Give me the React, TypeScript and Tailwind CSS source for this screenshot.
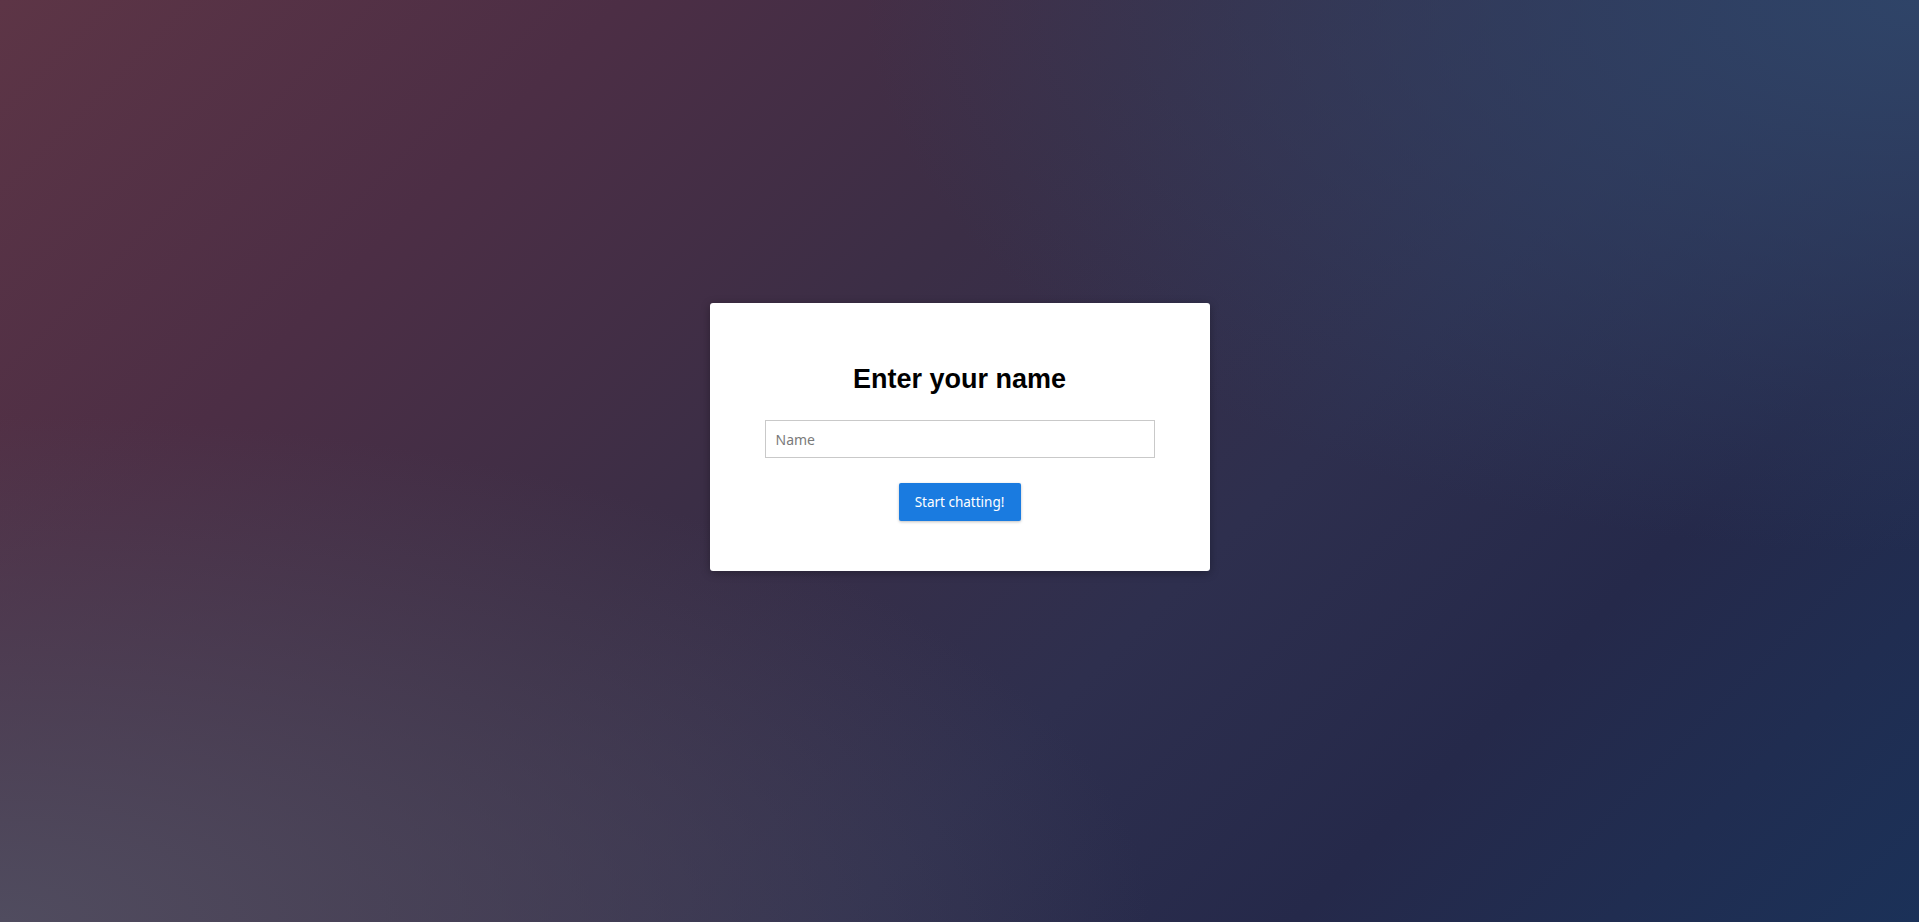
import { useState } from "react";

export default function App() {
    const [name, setName] = useState("");

    const handleSubmit = (e: React.FormEvent) => {
        e.preventDefault();
    };

    return (
        <main className="flex h-screen w-full items-center justify-center pb-[48px] bg-[radial-gradient(ellipse_60%_55%_at_0%_100%,#504c5f_0%,rgba(80,76,95,0)_100%),radial-gradient(ellipse_55%_60%_at_100%_0%,#2f4468_0%,rgba(47,68,104,0)_100%),linear-gradient(135deg,#5d3546_0%,#4c2e45_22%,#3b2e46_42%,#2e2f4e_62%,#25294a_78%,#1b3158_100%)] font-['Noto_Sans',sans-serif]">
            <form
                onSubmit={handleSubmit}
                className="flex w-[500px] flex-col items-center rounded-[3px] bg-white px-[55px] pt-[61px] pb-[50px] shadow-[0_2px_10px_rgba(0,0,0,0.3)]"
            >
                <h2 className="font-['Liberation_Sans',Arial,sans-serif] text-[27px] leading-[30px] font-bold text-black">
                    Enter your name
                </h2>
                <input
                    value={name}
                    onChange={(e) => setName(e.target.value)}
                    placeholder="Name"
                    className="mt-[26px] h-[38px] w-full border border-[#c9c9c9] px-[10px] text-[14px] text-[#333] outline-none placeholder:text-[#7a7a7a]"
                />
                <button
                    type="submit"
                    className="mt-[25px] h-[38px] w-[122px] rounded-[2px] bg-[#1a7be0] text-[13.5px] text-white shadow-[0_1px_3px_rgba(0,0,0,0.25)]"
                >
                    Start chatting!
                </button>
            </form>
        </main>
    );
}
